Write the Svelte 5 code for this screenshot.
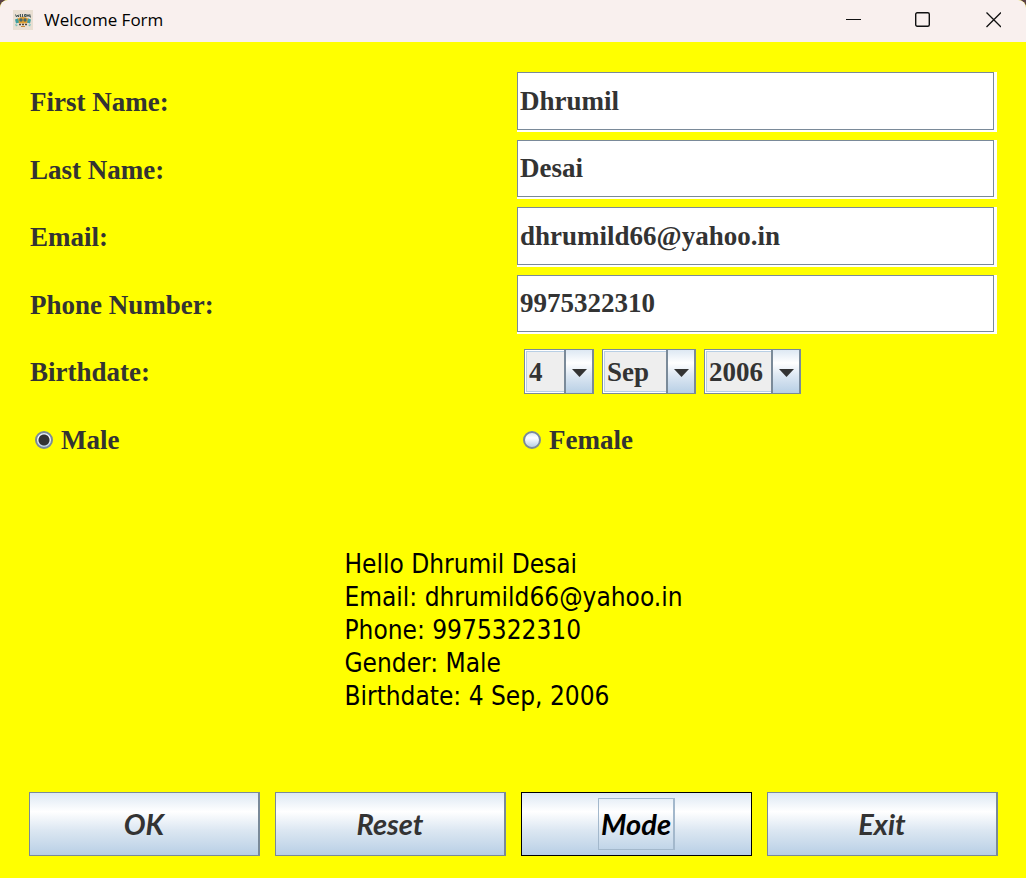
<script>
  const months = ['Jan', 'Feb', 'Mar', 'Apr', 'May', 'Jun', 'Jul', 'Aug', 'Sep', 'Oct', 'Nov', 'Dec'];
  const days = Array.from({ length: 31 }, (_, i) => i + 1);
  const years = Array.from({ length: 60 }, (_, i) => 1965 + i);

  let fields = $state([
    { id: 'first', label: 'First Name:', type: 'text', value: 'Dhrumil' },
    { id: 'last', label: 'Last Name:', type: 'text', value: 'Desai' },
    { id: 'email', label: 'Email:', type: 'email', value: 'dhrumild66@yahoo.in' },
    { id: 'phone', label: 'Phone Number:', type: 'tel', value: '9975322310' }
  ]);
  let day = $state(4);
  let month = $state('Sep');
  let year = $state(2006);
  let gender = $state('Male');
</script>

{#snippet arrow()}
  <svg class="arrow" viewBox="0 0 26 43" aria-hidden="true">
    <path d="M6 19h15l-7.5 8z" fill="#333" />
  </svg>
{/snippet}

<div class="window">
  <header>
    <svg class="logo" viewBox="0 0 20 20" aria-hidden="true">
      <rect width="20" height="20" fill="#e9dfd2" />
      <path d="M2.5 4.5l1 2.5 1-2 1 2 .5-2.500M7.5 4v3h1M9.5 4v3h1M11.5 4.500h1.5v2h-1.500zM14 7V4.500l1 1.500 1-1.500v2.500M17 4.500v2.500h1" fill="none" stroke="#34494c" stroke-width=".9" />
      <path d="M4 9q6-4 12 0l1 3q-7 3-14 0z" fill="#e3a02f" />
      <path d="M2 9.500l3-1 1 4-3 1zM18 9.500l-3-1-1 4 3 1z" fill="#3f9fa0" />
      <circle cx="8" cy="10" r="1.7" fill="#48696a" />
      <circle cx="12" cy="10" r="1.7" fill="#48696a" />
      <path d="M6 14.500h2M9 14.500h2M12 14.500h2" stroke="#4b453b" stroke-width="1.4" />
      <path d="M8 16.500h4" stroke="#c98a35" />
      <path d="M2 14l3 1-2 1.500zM18 14l-3 1 2 1.500z" fill="#75c3bd" />
    </svg>
    <h1>Welcome Form</h1>
    <div class="controls">
      <button type="button" aria-label="Minimize">
        <svg viewBox="0 0 16 16"><path d="M1 7.500h15" /></svg>
      </button>
      <button type="button" aria-label="Maximize">
        <svg viewBox="0 0 16 16"><rect x=".7" y=".7" width="13.6" height="13.6" rx="1.5" stroke-width="1.4" /></svg>
      </button>
      <button type="button" aria-label="Close">
        <svg viewBox="0 0 16 16"><path d="M1.5.5L16 15M16 .5L1.5 15" stroke-width="1.3" /></svg>
      </button>
    </div>
  </header>

  <form onsubmit={(e) => e.preventDefault()}>
    <div class="grid">
      {#each fields as field}
        <label for={field.id}>{field.label}</label>
        <div class="field">
          <input id={field.id} type={field.type} bind:value={field.value} spellcheck="false" />
        </div>
      {/each}
      <label for="day">Birthdate:</label>
      <div class="date">
        <div class="combo day">
          <select id="day" bind:value={day}>
            {#each days as d}<option value={d}>{d}</option>{/each}
          </select>
          {@render arrow()}
        </div>
        <div class="combo month">
          <select aria-label="Month" bind:value={month}>
            {#each months as m}<option value={m}>{m}</option>{/each}
          </select>
          {@render arrow()}
        </div>
        <div class="combo year">
          <select aria-label="Year" bind:value={year}>
            {#each years as y}<option value={y}>{y}</option>{/each}
          </select>
          {@render arrow()}
        </div>
      </div>
      {#each ['Male', 'Female'] as g}
        <label class="radio">
          <input type="radio" name="gender" value={g} bind:group={gender} />
          {g}
        </label>
      {/each}
    </div>

    <div class="result">
      <output>
        Hello {fields[0].value} {fields[1].value}<br />
        Email: {fields[2].value}<br />
        Phone: {fields[3].value}<br />
        Gender: {gender}<br />
        Birthdate: {day} {month}, {year}
      </output>
    </div>

    <div class="actions">
      <button type="submit"><span>OK</span></button>
      <button type="button"><span>Reset</span></button>
      <button type="button" class="focused"><span>Mode</span></button>
      <button type="button"><span>Exit</span></button>
    </div>
  </form>
</div>

<style>
  :global(body) {
    margin: 0;
    background: #5b4146;
  }
  .window {
    display: flex;
    flex-direction: column;
    min-height: 100vh;
    border-radius: 8px 8px 0 0;
    overflow: hidden;
    background: #ff0;
  }
  * {
    box-sizing: border-box;
  }
  header {
    display: flex;
    align-items: center;
    height: 42px;
    padding: 0 0 3px 13px;
    background: #f9f0ee;
  }
  .logo {
    width: 20px;
    height: 20px;
    margin-right: 11px;
  }
  h1 {
    margin: 0;
    font: 400 17px/24px "Open Sans", sans-serif;
    color: #000;
  }
  .controls {
    display: flex;
    gap: 4px;
    margin-left: auto;
  }
  .controls button {
    display: grid;
    place-items: center;
    width: 66px;
    height: 39px;
    padding: 0;
    border: 0;
    background: none;
  }
  .controls svg {
    width: 16px;
    height: 16px;
    fill: none;
    stroke: #111;
  }
  form {
    flex: 1;
    display: flex;
    flex-direction: column;
    padding: 30px 28px 22px 29px;
  }
  .grid {
    display: grid;
    grid-template-columns: 1fr 1fr;
    grid-auto-rows: 1fr;
    gap: 8px;
    height: 397px;
    padding: 0 1px 0 0;
    font: 700 27px/32px "Liberation Serif", serif;
    color: #333;
  }
  label {
    align-self: center;
    padding: 1px 0 0 1px;
  }
  .field {
    display: flex;
    padding: 0 3px 2px 0;
    background: #fff;
  }
  .field input {
    flex: 1;
    min-width: 0;
    padding: 0 2px;
    border: 1px solid #7a8a99;
    border-radius: 0;
    background: #fff;
    font: inherit;
    color: inherit;
    outline: 0;
  }
  .date {
    display: flex;
    align-items: center;
    gap: 8px;
    padding-left: 7px;
  }
  .combo {
    position: relative;
    height: 45px;
  }
  .day {
    width: 70px;
  }
  .month {
    width: 94px;
  }
  .year {
    width: 97px;
  }
  .combo select {
    appearance: none;
    width: 100%;
    height: 100%;
    padding: 0 30px 0 4px;
    border: 1px solid #7a8a99;
    border-right-width: 2px;
    border-radius: 0;
    background: #eee;
    box-shadow: inset 0 0 0 1px #fff, inset 0 0 0 2px #b8cfe5;
    font: inherit;
    color: inherit;
  }
  .arrow {
    position: absolute;
    top: 0;
    right: 0;
    width: 30px;
    height: 45px;
    border: 1px solid #7a8a99;
    border-width: 1px 2px;
    background: linear-gradient(#dde8f3, #fff 30%, #dce7f2 60%, #b8cfe5);
    pointer-events: none;
  }
  .radio {
    display: flex;
    align-items: center;
    gap: 8px;
    padding-left: 6px;
  }
  .radio input {
    appearance: none;
    width: 18px;
    height: 18px;
    margin: 0;
    border: 2px solid #7a8a99;
    border-radius: 50%;
    background: linear-gradient(#dde8f3, #fff 35%, #b8cfe5);
  }
  .radio input:checked {
    background: radial-gradient(circle, #333 5px, transparent 6px), linear-gradient(#dde8f3, #fff 35%, #b8cfe5);
  }
  .result {
    flex: 1;
    display: grid;
    place-items: center;
    padding: 8px 0;
  }
  output {
    font: 400 26px/33px "DejaVu Sans Condensed", "DejaVu Sans", sans-serif;
    color: #000;
  }
  .actions {
    display: grid;
    grid-template-columns: repeat(4, 1fr);
    gap: 15px;
  }
  .actions button {
    display: grid;
    place-items: center;
    height: 64px;
    padding: 0;
    border: 1px solid #7a8a99;
    border-right-width: 2px;
    border-radius: 0;
    background: linear-gradient(#dde8f3, #fff 30%, #dce7f2 60%, #b8cfe5);
    font: italic 700 29px/50px Lato, sans-serif;
    color: #333;
  }
  .actions .focused {
    border: 1px solid #000;
    color: #000;
  }
  .focused span {
    padding: 0 2px;
    border: 1px solid #a3b8cc;
    border-right-width: 2px;
  }
</style>
